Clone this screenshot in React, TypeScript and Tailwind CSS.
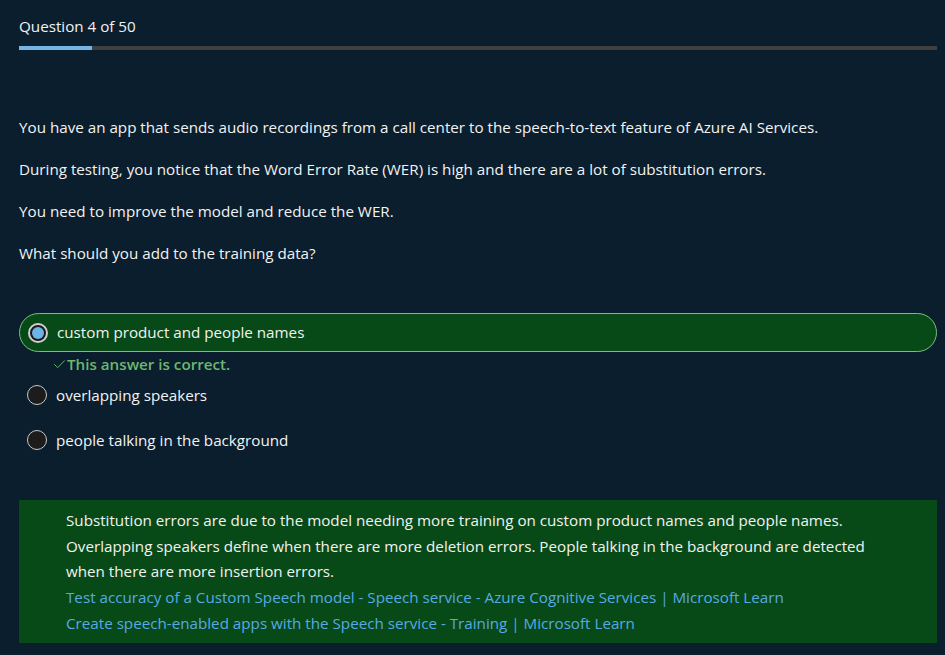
import { Check } from 'lucide-react';

const options = [
    { label: 'custom product and people names', selected: true },
    { label: 'overlapping speakers', selected: false },
    { label: 'people talking in the background', selected: false },
];

function Radio({ selected }: { selected: boolean }) {
    if (selected) {
        return (
            <span className="flex h-[20px] w-[20px] shrink-0 items-center justify-center rounded-full border-2 border-[#d0d0d0] bg-[#1a1a1a]">
                <span className="h-[12px] w-[12px] rounded-full bg-[#6cb4e8]" />
            </span>
        );
    }
    return <span className="h-[20px] w-[20px] shrink-0 rounded-full border border-[#c8c8c8] bg-[#1c1c1c]" />;
}

export default function App() {
    return (
        <div className="min-h-[655px] bg-[#0a1e2d] px-[19px] pt-[16px] text-[15.2px] text-[#f2f2f2] [font-family:'Open_Sans',sans-serif]">
            <div className="leading-[20px]">Question 4 of 50</div>
            <div className="mt-[10px] mr-[-11px] flex h-[4px] bg-[#404040]">
                <div className="w-[73px] bg-[#73b5e5]" />
            </div>

            <div className="mt-[67px] space-y-[21px] leading-[21px]">
                <p>You have an app that sends audio recordings from a call center to the speech-to-text feature of Azure AI Services.</p>
                <p>During testing, you notice that the Word Error Rate (WER) is high and there are a lot of substitution errors.</p>
                <p>You need to improve the model and reduce the WER.</p>
                <p>What should you add to the training data?</p>
            </div>

            <div className="mt-[49px] mr-[-11px]">
                {options.map((o, i) =>
                    o.selected ? (
                        <div key={i}>
                            <div className="flex h-[39px] items-center gap-[9px] rounded-full border border-[#79c07a] bg-[#074a17] pl-[8px]">
                                <Radio selected />
                                <span>{o.label}</span>
                            </div>
                            <div className="flex h-[24px] items-center pl-[33px] font-semibold text-[#6cb86f]">
                                <Check className="h-[15px] w-[15px]" strokeWidth={1.5} />
                                <span>This answer is correct.</span>
                            </div>
                        </div>
                    ) : (
                        <div key={i} className="mb-[7px] flex h-[38px] items-center gap-[9px] pl-[8px]">
                            <Radio selected={false} />
                            <span>{o.label}</span>
                        </div>
                    )
                )}
            </div>

            <div className="mt-[41px] mr-[-11px] bg-[#074a17] pt-[8px] pb-[6px] pl-[47px] pr-[60px] leading-[25.7px]">
                <p>
                    Substitution errors are due to the model needing more training on custom product names and people names.
                    Overlapping speakers define when there are more deletion errors. People talking in the background are detected
                    when there are more insertion errors.
                </p>
                <a className="block text-[#58a9e4]">Test accuracy of a Custom Speech model - Speech service - Azure Cognitive Services | Microsoft Learn</a>
                <a className="block text-[#58a9e4]">Create speech-enabled apps with the Speech service - Training | Microsoft Learn</a>
            </div>
        </div>
    );
}
